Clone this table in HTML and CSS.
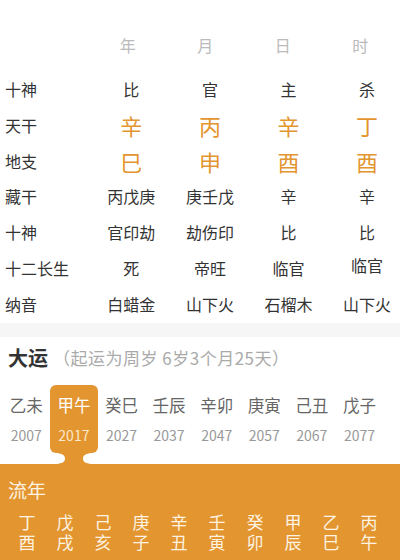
FILE: index.html
```html
<!DOCTYPE html>
<html lang="zh">
<head>
<meta charset="utf-8">
<link rel="stylesheet" href="styles.css">
</head>
<body>
<div class="chart">
  <div class="head-row">
    <div></div><div>年</div><div>月</div><div>日</div><div>时</div>
  </div>
  <div class="row"><div class="lab">十神</div><div>比</div><div>官</div><div>主</div><div>杀</div></div>
  <div class="row big"><div class="lab">天干</div><div>辛</div><div>丙</div><div>辛</div><div>丁</div></div>
  <div class="row big"><div class="lab">地支</div><div>巳</div><div>申</div><div>酉</div><div>酉</div></div>
  <div class="row"><div class="lab">藏干</div><div>丙戊庚</div><div>庚壬戊</div><div>辛</div><div>辛</div></div>
  <div class="row"><div class="lab">十神</div><div>官印劫</div><div>劫伤印</div><div>比</div><div>比</div></div>
  <div class="row"><div class="lab">十二长生</div><div>死</div><div>帝旺</div><div>临官</div><div class="up">临官</div></div>
  <div class="row"><div class="lab">纳音</div><div>白蜡金</div><div>山下火</div><div>石榴木</div><div>山下火</div></div>
</div>
<div class="band"></div>
<div class="dy-title"><span class="dy-name">大运</span><span class="dy-sub">（起运为周岁 6岁3个月25天）</span></div>
<div class="dy-row">
  <div class="dy-cell"><div class="dy-box"><div class="gz">乙未</div><div class="yr">2007</div></div></div>
  <div class="dy-cell sel"><div class="dy-box"><div class="gz">甲午</div><div class="yr">2017</div></div>
    <svg class="neck" width="48" height="11" viewBox="0 0 48 11"><path d="M4,0 H44 C35,0 33,2.5 33,5.5 C33,8.5 35,11 44,11 H4 C13,11 15,8.5 15,5.5 C15,2.5 13,0 4,0 Z" fill="#e39530"/></svg>
  </div>
  <div class="dy-cell"><div class="dy-box"><div class="gz">癸巳</div><div class="yr">2027</div></div></div>
  <div class="dy-cell"><div class="dy-box"><div class="gz">壬辰</div><div class="yr">2037</div></div></div>
  <div class="dy-cell"><div class="dy-box"><div class="gz">辛卯</div><div class="yr">2047</div></div></div>
  <div class="dy-cell"><div class="dy-box"><div class="gz">庚寅</div><div class="yr">2057</div></div></div>
  <div class="dy-cell"><div class="dy-box"><div class="gz">己丑</div><div class="yr">2067</div></div></div>
  <div class="dy-cell"><div class="dy-box"><div class="gz">戊子</div><div class="yr">2077</div></div></div>
</div>
<div class="ln-panel">
  <div class="ln-title">流年</div>
  <div class="ln-row">
    <div class="ln-cell"><div>丁</div><div>酉</div></div>
    <div class="ln-cell"><div>戊</div><div>戌</div></div>
    <div class="ln-cell"><div>己</div><div>亥</div></div>
    <div class="ln-cell"><div>庚</div><div>子</div></div>
    <div class="ln-cell"><div>辛</div><div>丑</div></div>
    <div class="ln-cell"><div>壬</div><div>寅</div></div>
    <div class="ln-cell"><div>癸</div><div>卯</div></div>
    <div class="ln-cell"><div>甲</div><div>辰</div></div>
    <div class="ln-cell"><div>乙</div><div>巳</div></div>
    <div class="ln-cell"><div>丙</div><div>午</div></div>
  </div>
</div>
</body>
</html>
```

FILE: styles.css
```css
html, body {
  margin: 0;
  padding: 0;
  background: #fff;
  overflow: hidden;
  width: 400px;
  height: 560px;
}
body {
  font-family: "Noto Sans CJK SC", "Noto Sans", sans-serif;
  color: #333;
}
.chart {
  padding-top: 27px;
}
.head-row {
  display: grid;
  grid-template-columns: 89px repeat(4, 77.5px);
  height: 36px;
  line-height: 36px;
  font-size: 16px;
  color: #bbb;
  text-align: center;
  margin-bottom: 9px;
}
.row {
  display: grid;
  grid-template-columns: 92px repeat(4, 78.6px);
  height: 35.8px;
  line-height: 35.8px;
  font-size: 16px;
  color: #333;
  text-align: center;
  white-space: nowrap;
}
.row .lab {
  text-align: left;
  padding-left: 5px;
  font-size: 16px;
  color: #333;
}
.row.big {
  font-size: 22px;
  color: #e39530;
}
.row.big .lab {
  font-size: 16px;
  color: #333;
}
.row .up {
  position: relative;
  top: -3px;
}
.band {
  height: 14px;
  background: #f6f6f6;
}
.dy-title {
  display: flex;
  align-items: center;
  height: 28px;
  margin-top: 7px;
  padding-left: 8px;
}
.dy-name {
  font-size: 20px;
  font-weight: bold;
  color: #333;
}
.dy-sub {
  font-size: 17px;
  letter-spacing: 0.5px;
  color: #aaa;
  margin-left: 5px;
}
.dy-row {
  display: flex;
  align-items: flex-start;
  margin-top: 13px;
  padding-left: 2.5px;
}
.dy-cell {
  width: 47.6px;
  display: flex;
  flex-direction: column;
  align-items: center;
}
.dy-box {
  width: 100%;
  height: 68px;
  box-sizing: border-box;
  padding-top: 10px;
  text-align: center;
  border-radius: 6px;
}
.gz {
  font-size: 16.5px;
  line-height: 20px;
  color: #666;
}
.yr {
  font-size: 14px;
  line-height: 20px;
  margin-top: 10px;
  color: #999;
}
.sel .dy-box {
  background: #e39530;
}
.sel .gz {
  color: #fff;
}
.sel .yr {
  color: #fbe8c8;
}
.neck {
  display: block;
}
.ln-panel {
  background: #e39530;
  height: 100px;
  padding-left: 8px;
  padding-top: 13px;
  box-sizing: border-box;
}
.ln-title {
  font-size: 19px;
  line-height: 26px;
  color: #fdf3e2;
}
.ln-row {
  display: flex;
  margin-top: 9px;
}
.ln-cell {
  width: 38px;
  display: flex;
  flex-direction: column;
  align-items: center;
  font-size: 17px;
  line-height: 20px;
  color: #fdf3e2;
}
```
